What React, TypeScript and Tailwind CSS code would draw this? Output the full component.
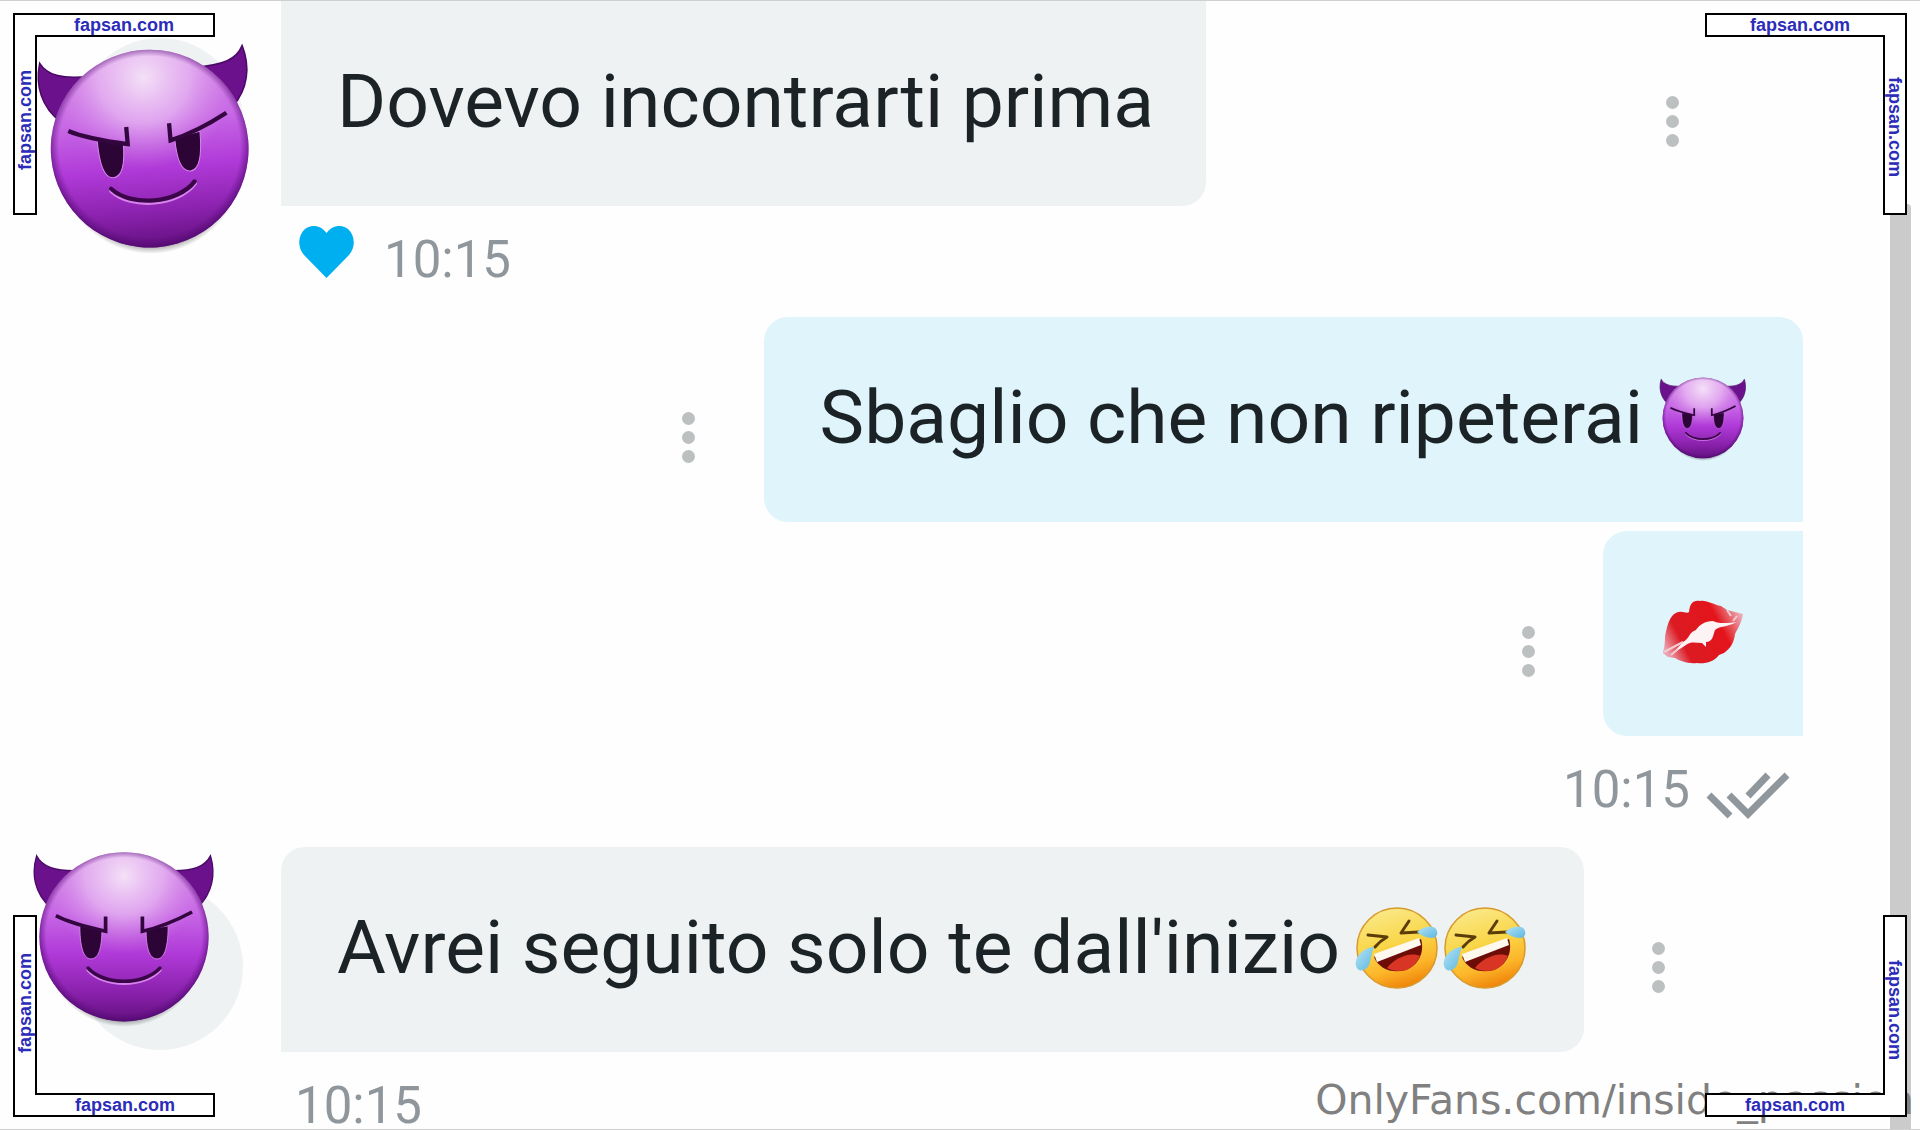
import { useId } from 'react';
import type { ReactNode } from 'react';

type Corner = 'tl' | 'tr' | 'bl' | 'br';

function DevilFace({ className }: { className: string }) {
  const id = useId();
  return (
    <svg viewBox="0 0 200 200" className={className} role="img" aria-label="smiling face with horns">
      <defs>
        <linearGradient id={`${id}-face`} x1="0" y1="0" x2="0" y2="1">
          <stop offset="0" stopColor="#d58be6" />
          <stop offset="0.35" stopColor="#c869e6" />
          <stop offset="0.6" stopColor="#b03ad8" />
          <stop offset="0.82" stopColor="#8b22ae" />
          <stop offset="1" stopColor="#641080" />
        </linearGradient>
        <radialGradient id={`${id}-shine`} cx="0.5" cy="0.14" r="0.46">
          <stop offset="0" stopColor="#f6e6f8" stopOpacity="0.95" />
          <stop offset="0.5" stopColor="#ecc4f4" stopOpacity="0.65" />
          <stop offset="1" stopColor="#d58be6" stopOpacity="0" />
        </radialGradient>
        <radialGradient id={`${id}-rim`} cx="0.5" cy="0.49" r="0.52">
          <stop offset="0.88" stopColor="#5c0c80" stopOpacity="0" />
          <stop offset="1" stopColor="#4a0866" stopOpacity="0.85" />
        </radialGradient>
        <radialGradient id={`${id}-shadow`}>
          <stop offset="0.88" stopColor="#000" stopOpacity="0.5" />
          <stop offset="1" stopColor="#000" stopOpacity="0" />
        </radialGradient>
      </defs>
      <ellipse cx="100" cy="108" rx="88" ry="92" fill={`url(#${id}-shadow)`} />
      <path d="M5 14C11 26 25 31 52 30L20 70C3 55 -1 34 5 14Z" fill="#6b118c" stroke="#4c0a68" strokeWidth="1.5" />
      <path d="M194 14C188 26 175 31 148 30L180 70C196 55 200 34 194 14Z" fill="#6b118c" stroke="#4c0a68" strokeWidth="1.5" />
      <circle cx="100" cy="102" r="92" fill={`url(#${id}-face)`} />
      <circle cx="100" cy="102" r="92" fill={`url(#${id}-shine)`} />
      <circle cx="100" cy="102" r="92" fill={`url(#${id}-rim)`} />
      <g fill="#2c0436" stroke="#d984ee" strokeWidth="1">
        <path d="M52 90L76 94C76 113 73 126 64 126C55 126 52 110 52 90Z" />
        <path d="M148 90L124 94C124 113 127 126 136 126C145 126 148 110 148 90Z" />
      </g>
      <g fill="none" stroke="#33063f" strokeWidth="4">
        <path d="M26 79C41 87 62 92 80 96V80" />
        <path d="M174 75C159 83 138 92 120 96V80" />
      </g>
      <path d="M61 138C78 157 122 157 139 138" fill="none" stroke="#d984ee" strokeWidth="4" strokeLinecap="round" />
      <path d="M61 136C78 155 122 155 139 136" fill="none" stroke="#3b0649" strokeWidth="4" strokeLinecap="round" />
    </svg>
  );
}

function LaughFace() {
  const id = useId();
  return (
    <svg viewBox="0 0 88 88" className="size-[88px]" role="img" aria-label="rolling on the floor laughing">
      <defs>
        <linearGradient id={`${id}-face`} x1="0.3" y1="0" x2="0.6" y2="1">
          <stop offset="0" stopColor="#fbe98a" />
          <stop offset="0.45" stopColor="#f9d648" />
          <stop offset="0.75" stopColor="#fdb62a" />
          <stop offset="1" stopColor="#ee8208" />
        </linearGradient>
        <linearGradient id={`${id}-tear`} x1="0" y1="0" x2="1" y2="1">
          <stop offset="0" stopColor="#b5e4f5" />
          <stop offset="1" stopColor="#5db6e0" />
        </linearGradient>
      </defs>
      <circle cx="45" cy="45" r="40" fill={`url(#${id}-face)`} stroke="#d99a2c" strokeWidth="1.5" />
      <path d="M16 32L35 34Q28 38 23 44" fill="none" stroke="#5c3c08" strokeWidth="3" strokeLinejoin="round" strokeLinecap="round" />
      <path d="M57 18Q53 24 49 30L67 29" fill="none" stroke="#5c3c08" strokeWidth="3" strokeLinejoin="round" strokeLinecap="round" />
      <path d="M22 54L69 36C73 50 66 62 54 67C40 71 27 66 22 54Z" fill="#6c0d08" />
      <path d="M35 65C41 56 58 48 68 53C65 60 60 65 54 67C47 69 40 68 35 65Z" fill="#d83524" />
      <path d="M22 51L67 35L69 42L25 59Z" fill="#fff8ee" />
      <path d="M22 44C13 44 2 53 4 63C6 70 14 68 17 62C19 57 19 51 22 44Z" fill={`url(#${id}-tear)`} />
      <path d="M65 29C71 23 83 21 85 28C87 36 77 38 65 29Z" fill={`url(#${id}-tear)`} />
    </svg>
  );
}

function KissMark() {
  const id = useId();
  return (
    <svg viewBox="0 0 88 88" className="size-[88px]" role="img" aria-label="kiss mark">
      <defs>
        <linearGradient id={`${id}-lips`} x1="0" y1="0.7" x2="1" y2="0.3">
          <stop offset="0" stopColor="#eba3b0" />
          <stop offset="0.22" stopColor="#dc1a22" />
          <stop offset="0.72" stopColor="#e3151b" />
          <stop offset="1" stopColor="#ebaab4" />
        </linearGradient>
      </defs>
      <path
        d="M4 66C5 61 6 56 6 50C8 39 11 26 20 25C24 24 28 27 30 25C31 16 34 13 41 14C48 13 55 18 62 19L68 23L84 27C83 35 79 41 76 47C75 55 72 61 65 66L60 68C55 75 46 77 38 76C29 77 21 74 16 71L9 70Z"
        fill={`url(#${id}-lips)`}
      />
      <path d="M24 55C31 51 30 45 37 43C40 38 46 34 54 34C57 36 66 37 78 35C69 40 60 39 56 43C54 48 54 55 47 55L47 60L43 56C37 56 32 54 27 58L13 67Z" fill="#fdf3f4" />
      <path d="M5 65L24 55M68 23L72 29M78 29L74 34M12 68L19 62" fill="none" stroke="#f6ccd3" strokeWidth="2" />
    </svg>
  );
}

function Menu() {
  return (
    <button type="button" aria-label="Message options" className="mt-[35px] flex w-8 shrink-0 flex-col items-center gap-[6px]">
      <span className="size-[13px] rounded-full bg-[#bdc0c1]" />
      <span className="size-[13px] rounded-full bg-[#bdc0c1]" />
      <span className="size-[13px] rounded-full bg-[#bdc0c1]" />
    </button>
  );
}

function Bubble({ className, children }: { className: string; children: ReactNode }) {
  return (
    <p className={`flex h-[205px] items-center whitespace-nowrap pb-[6px] pl-14 text-[75px] leading-[88px] text-[#1b2326] ${className}`}>
      {children}
    </p>
  );
}

function Time() {
  return <time className="text-[51px] leading-[60px] text-[#8f979c]">10:15</time>;
}

const frames: Record<Corner, { box: string; path: string; across: string; down: string }> = {
  tl: {
    box: 'left-[13px] top-[12px]',
    path: 'M1 1H201V23H23V201H1Z',
    across: 'left-[61px] top-0',
    down: 'left-0 top-[57px] rotate-180',
  },
  tr: {
    box: 'right-[13px] top-[12px]',
    path: 'M1 1H201V201H179V23H1Z',
    across: 'left-[45px] top-0',
    down: 'right-0 top-[64px]',
  },
  bl: {
    box: 'bottom-[12px] left-[13px]',
    path: 'M1 1H23V179H201V201H1Z',
    across: 'bottom-0 left-[62px]',
    down: 'left-0 top-[38px] rotate-180',
  },
  br: {
    box: 'bottom-[12px] right-[13px]',
    path: 'M179 1H201V201H1V179H179Z',
    across: 'bottom-0 left-[40px]',
    down: 'right-0 top-[45px]',
  },
};

function CornerFrame({ corner }: { corner: Corner }) {
  const frame = frames[corner];
  return (
    <div
      className={`pointer-events-none absolute size-[202px] font-['Liberation_Sans',Arial,sans-serif] text-[18px] font-bold leading-[24px] text-[#2c2cb8] ${frame.box}`}
    >
      <svg viewBox="0 0 202 202" className="absolute inset-0 size-full" aria-hidden="true">
        <path d={frame.path} fill="#fff" stroke="#000" strokeWidth="2" />
      </svg>
      <span className={`absolute ${frame.across}`}>fapsan.com</span>
      <span className={`absolute [writing-mode:vertical-rl] ${frame.down}`}>fapsan.com</span>
    </div>
  );
}

export default function App() {
  return (
    <div className="relative min-h-screen overflow-hidden border-y border-[#cfcfcf] bg-[#fefefe] font-['Roboto',sans-serif]">
      <main className="flex flex-col">
        {/* Incoming, first message */}
        <section className="flex h-[316px]">
          <div className="relative w-[281px] shrink-0">
            <div className="absolute left-[77px] top-[37px] size-[166px] rounded-full bg-[#eef2f3]" />
            <DevilFace className="absolute left-[42px] top-[38px] size-[215px] -rotate-5" />
          </div>
          <div className="flex flex-1 flex-col">
            <div className="flex items-center justify-between pr-[232px]">
              <Bubble className="rounded-br-[24px] bg-[#eef2f3] pr-[52px]">Dovevo incontrarti prima</Bubble>
              <Menu />
            </div>
            <div className="flex items-start gap-[30px] pl-[18px] pt-[20px]">
              <svg viewBox="0 0 55 52" className="h-[52px] w-[55px]" role="img" aria-label="Liked">
                <path d="M27.500 52L5 29C-2 21-1 9 6 3C13-2 22-1 27.500 7C33-1 42-2 49 3C56 9 57 21 50 29Z" fill="#00aff0" />
              </svg>
              <div className="pt-[4px]">
                <Time />
              </div>
            </div>
          </div>
        </section>

        {/* Outgoing */}
        <section className="flex flex-col items-end gap-[9px] pr-[117px]">
          <div className="flex items-center gap-[59px]">
            <Menu />
            <Bubble className="gap-4 rounded-l-[24px] rounded-tr-[24px] bg-[#e0f4fc] pr-14">
              Sbaglio che non ripeterai
              <DevilFace className="size-[88px]" />
            </Bubble>
          </div>
          <div className="flex items-center gap-[59px]">
            <Menu />
            <Bubble className="rounded-l-[24px] bg-[#e0f4fc] pr-14">
              <KissMark />
            </Bubble>
          </div>
        </section>
        <div className="flex h-[111px] items-start justify-end gap-4 pr-[130px] pt-[24px]">
          <Time />
          <svg viewBox="0 0 84 48" className="mt-[11px] h-[48px] w-[84px]" role="img" aria-label="Read">
            <path d="M3 24L24 45M42 25L62 4M23 24L42 43L81 4" fill="none" stroke="#8f979c" strokeWidth="7" />
          </svg>
        </div>

        {/* Incoming, last message */}
        <section className="flex">
          <div className="relative w-[281px] shrink-0">
            <div className="absolute left-[77px] top-[37px] size-[166px] rounded-full bg-[#eef2f3]" />
            <DevilFace className="absolute left-[32px] top-[-4px] size-[184px]" />
          </div>
          <div className="flex flex-col">
            <div className="flex items-center gap-[59px]">
              <Bubble className="rounded-r-[24px] rounded-tl-[24px] bg-[#eef2f3] pr-14">
                Avrei seguito solo te dall'inizio
                <span className="flex pl-3">
                  <LaughFace />
                  <LaughFace />
                </span>
              </Bubble>
              <Menu />
            </div>
            <div className="h-[76px] pl-[14px] pt-[24px]">
              <Time />
            </div>
          </div>
        </section>
      </main>

      {/* Scroll thumb */}
      <div className="absolute bottom-0 right-[9px] top-[203px] w-[21px] rounded-t bg-[#cbcbcb]" />

      <span className="absolute bottom-[4px] right-[6px] font-['DejaVu_Sans',sans-serif] text-[41px] leading-[50px] text-[#808080]">
        OnlyFans.com/inside_passion
      </span>

      <CornerFrame corner="tl" />
      <CornerFrame corner="tr" />
      <CornerFrame corner="bl" />
      <CornerFrame corner="br" />
    </div>
  );
}
